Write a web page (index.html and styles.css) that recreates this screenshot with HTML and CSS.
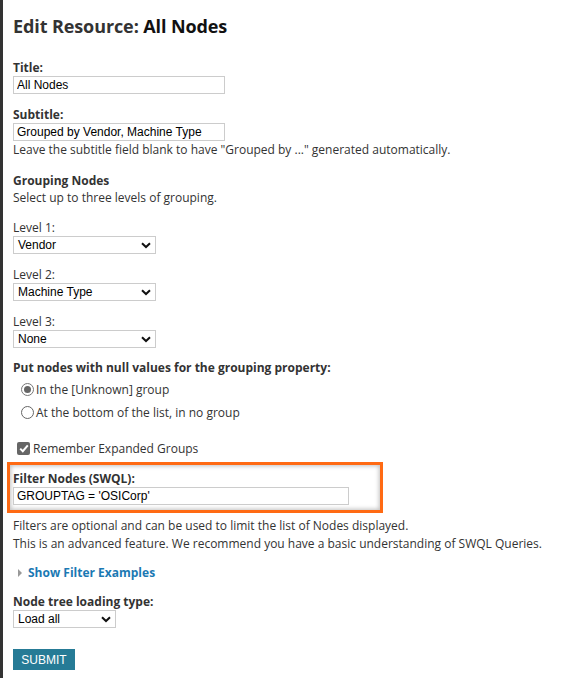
FILE: index.html
```html
<!DOCTYPE html>
<html>
<head>
<meta charset="utf-8">
<link rel="stylesheet" href="styles.css">
</head>
<body>
<div class="page">
  <h1 class="heading">Edit Resource: <span class="heading-name">All Nodes</span></h1>

  <div class="field first">
    <div class="label">Title:</div>
    <input class="text-input title-input" type="text" value="All Nodes">
  </div>

  <div class="field">
    <div class="label">Subtitle:</div>
    <input class="text-input title-input" type="text" value="Grouped by Vendor, Machine Type">
    <div class="help">Leave the subtitle field blank to have "Grouped by ..." generated automatically.</div>
  </div>

  <div class="field section">
    <div class="label">Grouping Nodes</div>
    <div class="help">Select up to three levels of grouping.</div>
  </div>

  <div class="level">
    <div class="level-label">Level 1:</div>
    <div class="select level-select"><span>Vendor</span><svg class="chev" width="10" height="7" viewBox="0 0 10 7"><path d="M1 1.2 L5 5 L9 1.2" fill="none" stroke="#111" stroke-width="2"/></svg></div>
  </div>
  <div class="level">
    <div class="level-label">Level 2:</div>
    <div class="select level-select"><span>Machine Type</span><svg class="chev" width="10" height="7" viewBox="0 0 10 7"><path d="M1 1.2 L5 5 L9 1.2" fill="none" stroke="#111" stroke-width="2"/></svg></div>
  </div>
  <div class="level">
    <div class="level-label">Level 3:</div>
    <div class="select level-select"><span>None</span><svg class="chev" width="10" height="7" viewBox="0 0 10 7"><path d="M1 1.2 L5 5 L9 1.2" fill="none" stroke="#111" stroke-width="2"/></svg></div>
  </div>

  <div class="nulls">
    <div class="label">Put nodes with null values for the grouping property:</div>
    <div class="radios">
      <div class="radio-row"><span class="radio checked"></span><span>In the [Unknown] group</span></div>
      <div class="radio-row"><span class="radio"></span><span>At the bottom of the list, in no group</span></div>
    </div>
  </div>

  <div class="check-row">
    <span class="checkbox"><svg width="10" height="9" viewBox="0 0 10 9"><path d="M1.2 4.6 L3.8 7.2 L8.8 1.4" fill="none" stroke="#fff" stroke-width="2"/></svg></span>
    <span>Remember Expanded Groups</span>
  </div>

  <div class="filter-box">
    <div class="label">Filter Nodes (SWQL):</div>
    <input class="text-input filter-input" type="text" value="GROUPTAG = 'OSICorp'">
  </div>

  <div class="help filter-help">Filters are optional and can be used to limit the list of Nodes displayed.<br>This is an advanced feature. We recommend you have a basic understanding of SWQL Queries.</div>

  <div class="examples"><span class="tri"></span><span class="examples-link">Show Filter Examples</span></div>

  <div class="field loading">
    <div class="label">Node tree loading type:</div>
    <div class="select load-select"><span>Load all</span><svg class="chev" width="10" height="7" viewBox="0 0 10 7"><path d="M1 1.2 L5 5 L9 1.2" fill="none" stroke="#111" stroke-width="2"/></svg></div>
  </div>

  <button class="submit">SUBMIT</button>
</div>
</body>
</html>
```
FILE: styles.css
```css
html, body {
  margin: 0;
  padding: 0;
  background: #fff;
}
body {
  font-family: "Open Sans", "Noto Sans", sans-serif;
  font-size: 12px;
  color: #333;
}
.page {
  border-left: 3px solid #333;
  min-height: 678px;
  box-sizing: border-box;
  padding: 11px 0 0 10px;
}
.heading {
  margin: 0;
  font-size: 18px;
  font-weight: 700;
  line-height: 30px;
  color: #333;
  letter-spacing: -0.1px;
}
.heading-name {
  color: #111;
}
.field {
  margin-top: 13px;
}
.field.first {
  margin-top: 19px;
}
.label {
  font-weight: 700;
  font-size: 12px;
  line-height: 16px;
  color: #333;
}
.help {
  font-size: 12px;
  line-height: 18px;
  color: #333;
}
.text-input {
  display: block;
  box-sizing: border-box;
  height: 18px;
  border: 1px solid #ccc;
  padding: 0 3px;
  font-family: "Liberation Sans", Arial, sans-serif;
  font-size: 12px;
  color: #000;
  margin: 0;
  outline: none;
}
.title-input {
  width: 212px;
}
.filter-input {
  width: 336px;
}
.field.section {
  margin-top: 14px;
}
.level {
  margin-top: 13px;
}
.level-label {
  line-height: 16px;
}
.select {
  box-sizing: border-box;
  height: 18px;
  border: 1px solid #ccc;
  display: flex;
  align-items: center;
  justify-content: space-between;
  padding: 0 4px 0 4px;
  font-family: "Liberation Sans", Arial, sans-serif;
  font-size: 12px;
  color: #000;
  background: #fff;
}
.chev {
  display: block;
}
.level-select {
  width: 143px;
}
.load-select {
  width: 103px;
}
.nulls {
  margin-top: 12px;
}
.radios {
  padding-top: 2px;
}
.radio-row {
  display: flex;
  align-items: center;
  gap: 2px;
  margin-left: 8px;
  height: 23px;
}
.radio {
  box-sizing: border-box;
  width: 13px;
  height: 13px;
  border: 1px solid #666;
  border-radius: 50%;
  background: #fff;
  position: relative;
}
.radio.checked {
  border-color: #777;
}
.radio.checked::after {
  content: "";
  position: absolute;
  left: 2px;
  top: 2px;
  width: 7px;
  height: 7px;
  border-radius: 50%;
  background: #666;
}
.check-row {
  display: flex;
  align-items: center;
  gap: 3px;
  margin-top: 15px;
  margin-left: 4px;
  height: 18px;
}
.checkbox {
  width: 13px;
  height: 13px;
  border-radius: 2px;
  background: #666;
  display: flex;
  align-items: center;
  justify-content: center;
}
.filter-box {
  margin: 5px 0 0 -6px;
  width: 376px;
  box-sizing: border-box;
  border: 3px solid #ff6a13;
  box-shadow: inset 0 0 4px 1px rgba(0,0,0,0.25);
  padding: 6px 0 5px 3px;
}
.filter-help {
  margin-top: 4px;
}
.examples {
  margin-top: 11px;
  display: flex;
  align-items: center;
  gap: 6px;
  padding-left: 5px;
}
.tri {
  width: 0;
  height: 0;
  border-top: 4px solid transparent;
  border-bottom: 4px solid transparent;
  border-left: 4px solid #999;
}
.examples-link {
  color: #1b79b3;
  font-weight: 700;
  line-height: 18px;
}
.field.loading {
  margin-top: 12px;
}
.submit {
  display: block;
  margin-top: 21px;
  width: 62px;
  height: 21px;
  padding: 0;
  border: none;
  background: #267b96;
  color: #fff;
  font-family: "Liberation Sans", Arial, sans-serif;
  font-size: 12px;
}
```
